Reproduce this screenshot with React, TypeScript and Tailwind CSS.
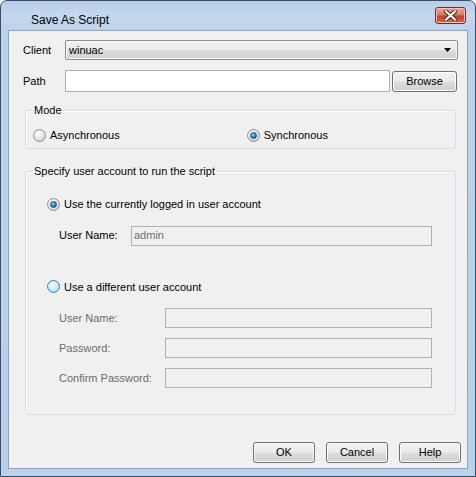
import React from 'react';

const font = "font-['Liberation_Sans',Arial,sans-serif]";

function Radio({ checked, hot }: { checked?: boolean; hot?: boolean }) {
  const ring = hot
    ? 'border-[#3c7fb1] bg-[radial-gradient(circle_at_40%_35%,#f4fbff_0%,#c8e8fb_55%,#8fc6ea_100%)]'
    : 'border-[#8e8f8f] bg-[radial-gradient(circle_at_40%_35%,#ffffff_0%,#e2e2e2_55%,#bdbdbd_100%)]';
  return (
    <span className={`w-[13px] h-[13px] rounded-full border flex items-center justify-center shrink-0 ${ring}`}>
      {checked && (
        <span className="w-[7px] h-[7px] rounded-full bg-[radial-gradient(circle_at_40%_35%,#8fe0ff_0%,#1c8bd0_50%,#0d3f70_100%)] border border-[#1a4f7a]" />
      )}
    </span>
  );
}

function Btn({ label, w = 'w-[62px]' }: { label: string; w?: string }) {
  return (
    <button className={`${w} h-[21px] rounded-[3px] border border-[#707070] bg-[linear-gradient(#f2f2f2_0%,#ebebeb_48%,#dddddd_52%,#cfcfcf_100%)] shadow-[inset_0_0_0_1px_#fcfcfc] text-[11px] text-black flex items-center justify-center`}>
      {label}
    </button>
  );
}

function Field({ label, value, w, labelW, disabled }: { label: string; value?: string; w: string; labelW: string; disabled?: boolean }) {
  return (
    <div className="flex items-center">
      <span className={`${labelW} text-[11px] ${disabled ? 'text-[#6d6d6d]' : 'text-black'}`}>{label}</span>
      <div className={`${w} h-[20px] border border-[#b2b2b2] bg-[#f0f0f0] flex items-center px-[2px] text-[11px] text-[#6d6d6d]`}>
        {value}
      </div>
    </div>
  );
}

export default function App() {
  return (
    <div className={`w-[476px] h-[477px] ${font} relative rounded-t-[7px] border border-[#3a4d66] bg-[linear-gradient(180deg,#b6cde6_0px,#c4d8ee_14px,#bcd2ea_30px,#b9d1ea_100%)] flex flex-col`}>
      {/* title bar */}
      <div className="h-[29px] flex items-center shrink-0">
        <span className="ml-[30px] mt-[8px] text-[12px] text-black">Save As Script</span>
        <div className="ml-auto mr-[9px] mt-[-1px] w-[31px] h-[17px] rounded-[3px] border border-[#6b2d24] bg-[linear-gradient(#e8a898_0%,#d77a66_45%,#c2432c_55%,#cf6a4f_100%)] shadow-[inset_0_0_0_1px_#f1c3b6] flex items-center justify-center">
          <svg width="13" height="11" viewBox="0 0 13 11">
            <path d="M2 1.5 L11 9.5 M11 1.5 L2 9.5" stroke="#4a1d16" strokeWidth="4" strokeLinecap="square" />
            <path d="M2 1.5 L11 9.5 M11 1.5 L2 9.5" stroke="#ffffff" strokeWidth="2.2" strokeLinecap="square" />
          </svg>
        </div>
      </div>

      {/* client area */}
      <div className="mx-[7px] mb-[7px] flex-1 bg-[#f0f0f0] border border-[#8ba3bd] flex flex-col text-[11px] text-black">
        <div className="mt-[9px] flex items-center">
          <span className="ml-[14px] w-[42px]">Client</span>
          <div className="w-[393px] h-[20px] rounded-[2px] border border-[#8b8b8b] bg-[linear-gradient(#f2f2f2_0%,#ebebeb_48%,#dddddd_52%,#cfcfcf_100%)] shadow-[inset_0_0_0_1px_#fbfbfb] flex items-center px-[3px]">
            <span>winuac</span>
            <svg className="ml-auto mr-[3px]" width="7" height="4" viewBox="0 0 7 4">
              <path d="M0 0 H7 L3.5 4 Z" fill="#000" />
            </svg>
          </div>
        </div>

        <div className="mt-[10px] flex items-start">
          <span className="ml-[14px] w-[42px] mt-[3px]">Path</span>
          <div className="w-[325px] h-[22px] border border-[#abadb3] bg-white" />
          <div className="ml-[2px] mt-[1px]">
            <Btn label="Browse" w="w-[65px]" />
          </div>
        </div>

        <fieldset className="mt-[12px] ml-[16px] w-[431px] h-[45px] rounded-[3px] border border-[#d5dfe5] shadow-[inset_1px_1px_0_#ffffff] px-[7px]">
          <legend className="px-[1px] leading-[13px]">Mode</legend>
          <div className="flex items-center mt-[10px]">
            <div className="flex items-center gap-[4px]">
              <Radio />
              <span>Asynchronous</span>
            </div>
            <div className="flex items-center gap-[4px] ml-[127px]">
              <Radio checked />
              <span>Synchronous</span>
            </div>
          </div>
        </fieldset>

        <fieldset className="mt-[16px] ml-[16px] w-[431px] h-[250px] rounded-[3px] border border-[#d5dfe5] shadow-[inset_1px_1px_0_#ffffff] px-[7px]">
          <legend className="px-[1px] leading-[13px]">Specify user account to run the script</legend>
          <div className="ml-[14px] mt-[18px] flex items-center gap-[4px]">
            <Radio checked />
            <span>Use the currently logged in user account</span>
          </div>
          <div className="ml-[26px] mt-[13px]">
            <Field label="User Name:" value="admin" labelW="w-[72px]" w="w-[301px]" />
          </div>
          <div className="ml-[14px] mt-[33px] flex items-center gap-[4px]">
            <Radio hot />
            <span>Use a different user account</span>
          </div>
          <div className="ml-[26px] mt-[13px] flex flex-col gap-[10px]">
            <Field label="User Name:" labelW="w-[106px]" w="w-[267px]" disabled />
            <Field label="Password:" labelW="w-[106px]" w="w-[267px]" disabled />
            <Field label="Confirm Password:" labelW="w-[106px]" w="w-[267px]" disabled />
          </div>
        </fieldset>

        <div className="mt-[27px] ml-auto mr-[6px] flex gap-[11px]">
          <Btn label="OK" />
          <Btn label="Cancel" />
          <Btn label="Help" />
        </div>
      </div>
    </div>
  );
}
